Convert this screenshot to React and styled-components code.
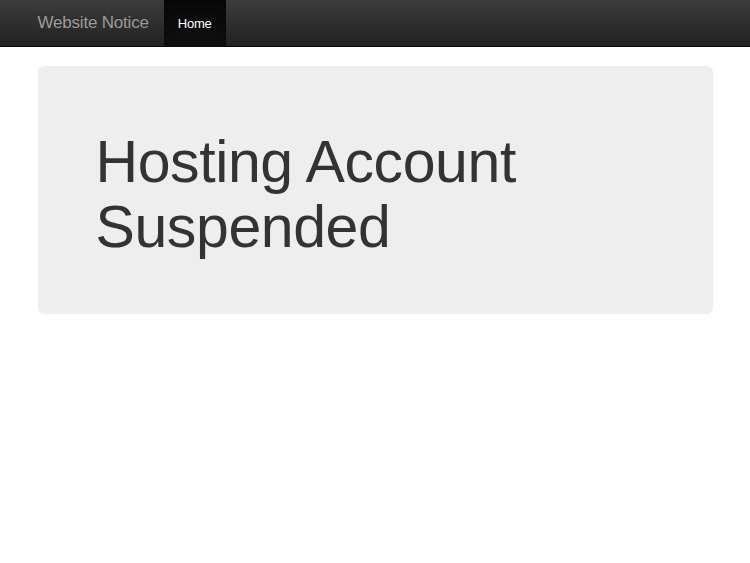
import React from "react";
import styled, { createGlobalStyle } from "styled-components";

const Global = createGlobalStyle`
  html, body { margin: 0; padding: 0; background: #fff; }
  body { font-family: "Liberation Sans", Arial, Helvetica, sans-serif; font-size: 14px; color: #333; }
`;

const Navbar = styled.nav`
  height: 46px;
  background-image: linear-gradient(to bottom, #3c3c3c 0%, #222 100%);
  border-bottom: 1px solid #080808;
  margin-bottom: 19px;
`;

const Container = styled.div`
  width: 675px;
  margin: 0 auto;
  display: flex;
  flex-direction: ${(p) => (p.$column ? "column" : "row")};
  align-items: stretch;
  height: 100%;
`;

const Brand = styled.a`
  display: flex;
  align-items: center;
  font-size: 17px;
  letter-spacing: -0.2px;
  color: #9d9d9d;
  text-decoration: none;
  padding-right: 15px;
  text-shadow: 0 -1px 0 rgba(0, 0, 0, 0.25);
`;

const NavItem = styled.a`
  display: flex;
  align-items: center;
  padding: 0 14px;
  font-size: 13px;
  letter-spacing: -0.2px;
  text-decoration: none;
  color: ${(p) => (p.$active ? "#fff" : "#9d9d9d")};
  background: ${(p) =>
    p.$active ? "linear-gradient(to bottom, #080808 0%, #0f0f0f 100%)" : "transparent"};
  box-shadow: ${(p) => (p.$active ? "inset 0 3px 9px rgba(0,0,0,0.25)" : "none")};
  text-shadow: 0 -1px 0 rgba(0, 0, 0, 0.25);
`;

const Jumbotron = styled.div`
  background: #eee;
  border-radius: 6px;
  padding: 48px 60px 48px 58px;
`;

const Title = styled.h1`
  margin: 16px 0 6px;
  font-size: 59px;
  line-height: 65px;
  font-weight: 400;
  color: #333;
  letter-spacing: -0.4px;
`;

export default function App() {
  return (
    <>
      <Global />
      <Navbar>
        <Container>
          <Brand href="#">Website Notice</Brand>
          <NavItem href="#" $active>Home</NavItem>
        </Container>
      </Navbar>
      <Container $column>
        <Jumbotron>
          <Title>
            Hosting Account
            <br />
            Suspended
          </Title>
        </Jumbotron>
      </Container>
    </>
  );
}
